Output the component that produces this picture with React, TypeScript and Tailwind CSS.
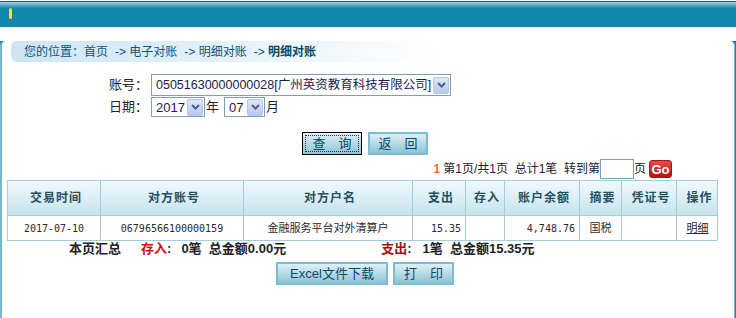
import React from 'react';

const font = { fontFamily: '"Liberation Sans", "Noto Sans CJK SC", sans-serif' };

function Arrow() {
  return (
    <div className="flex items-center justify-center w-[16px] h-[17px] bg-gradient-to-b from-[#dfe8fb] to-[#b7c9ef] border border-[#b5c6ec] rounded-[2px]">
      <svg width="9" height="6" viewBox="0 0 9 6">
        <path d="M1 1 L4.5 4.5 L8 1" stroke="#4d6185" strokeWidth="2" fill="none" />
      </svg>
    </div>
  );
}

function FakeSelect({ value, width, size }: { value: string; width: string; size: string }) {
  return (
    <div className={`${width} h-full flex items-center justify-between border border-[#7f9db9] bg-white pl-[4px] pr-[1px]`}>
      <span className={`${size} text-[#1b1b4a] whitespace-nowrap leading-none`}>{value}</span>
      <Arrow />
    </div>
  );
}

function Btn({ label, width, focus }: { label: string; width: string; focus?: boolean }) {
  return (
    <div
      className={`${width} h-[23px] flex items-center justify-center bg-gradient-to-b from-[#dff0f6] to-[#8cc4d6] text-[13px] text-[#0d4a66] ${
        focus ? 'border border-black p-[2px]' : 'border-2 border-[#7dbccf]'
      }`}
    >
      <div className={`w-full h-full flex items-center justify-center ${focus ? 'border border-dotted border-[#3a2a2a]' : ''}`}>
        {label}
      </div>
    </div>
  );
}

const cols = [
  { w: 'w-[92px]', h: '交易时间', v: '2017-07-10', a: 'text-center' },
  { w: 'w-[143px]', h: '对方账号', v: '06796566100000159', a: 'text-center' },
  { w: 'w-[169px]', h: '对方户名', v: '金融服务平台对外清算户', a: 'text-center' },
  { w: 'w-[53px]', h: '支出', v: '15.35', a: 'text-right pr-[4px]' },
  { w: 'w-[39px]', h: '存入', v: '', a: 'text-right' },
  { w: 'w-[75px]', h: '账户余额', v: '4,748.76', a: 'text-right pr-[4px]' },
  { w: 'w-[42px]', h: '摘要', v: '国税', a: 'text-center' },
  { w: 'w-[55px]', h: '凭证号', v: '', a: 'text-center' },
  { w: 'w-[42px]', h: '操作', v: '明细', a: 'text-center underline' },
];

export default function App() {
  return (
    <div className="w-[736px] h-[318px] overflow-hidden bg-white" style={font}>
      {/* top bar */}
      <div className="h-[27px] bg-[#1287ab]">
        <div className="h-[1px] bg-white" />
        <div className="h-[1px] bg-[#1c5f7c]" />
        <div className="h-[6px] bg-gradient-to-b from-[#9fd0df] to-[#1287ab]" />
        <div className="ml-[9px] w-[3px] h-[11px] bg-[#ffe21a] rounded-[2px]" />
      </div>
      {/* content frame */}
      <div className="bg-[#1287ab] pr-[1px]">
        <div className="h-[291px] bg-white rounded-t-[5px] border-l-2 border-r border-[#78b7cb] border-t-0">
          {/* breadcrumb */}
          <div className="mt-[14px] ml-[9px] w-[430px] h-[21px] flex items-center pl-[13px] rounded-l-[6px] bg-gradient-to-r from-[#cde5f3] via-[#e4f1f9] to-white text-[12px] text-[#0c5579] whitespace-nowrap">
            <span>您的位置：首页</span>
            <span className="ml-[7px]">-&gt; 电子对账</span>
            <span className="ml-[7px]">-&gt; 明细对账</span>
            <span className="ml-[7px]">-&gt; <b className="text-[#0a4763]">明细对账</b></span>
          </div>
          {/* form */}
          <div className="mt-[12px] flex h-[22px] items-center">
            <div className="ml-[103px] w-[43px] text-right text-[13px] text-[#222]">账号：</div>
            <div className="ml-[3px] h-[22px]">
              <FakeSelect value="05051630000000028[广州英资教育科技有限公司]" width="w-[300px]" size="text-[12.5px]" />
            </div>
          </div>
          <div className="mt-[1px] flex h-[20px] items-center">
            <div className="ml-[103px] w-[43px] text-right text-[13px] text-[#222]">日期：</div>
            <div className="ml-[3px] h-[20px]">
              <FakeSelect value="2017" width="w-[54px]" size="text-[13px]" />
            </div>
            <span className="ml-[1px] text-[13px] text-[#222]">年</span>
            <div className="ml-[5px] h-[20px]">
              <FakeSelect value="07" width="w-[41px]" size="text-[13px]" />
            </div>
            <span className="ml-[1px] text-[13px] text-[#222]">月</span>
          </div>
          {/* buttons */}
          <div className="mt-[15px] flex gap-[6px] pl-[300px]">
            <Btn label="查　询" width="w-[60px]" focus />
            <Btn label="返　回" width="w-[60px]" />
          </div>
          {/* pagination */}
          <div className="mt-[4px] flex items-center justify-end pr-[62px] h-[20px] text-[12px] text-[#222] whitespace-nowrap">
            <b className="text-[#f06a1a] mr-[3px]">1</b>
            <span>第1页/共1页&nbsp; 总计1笔&nbsp; 转到第</span>
            <div className="w-[34px] h-[20px] border border-[#7f9db9] bg-white" />
            <span>页</span>
            <div className="ml-[3px] w-[23px] h-[18px] rounded-[3px] bg-gradient-to-b from-[#e84a4a] to-[#b31313] border border-[#9e1a1a] flex items-center justify-center text-white font-bold text-[13px] leading-none">
              Go
            </div>
          </div>
          {/* table */}
          <div className="mt-[1px] ml-[5px] w-[711px] border border-[#a6cbd9]">
            <div className="flex h-[35px] bg-gradient-to-b from-[#f1f9fc] to-[#c6e3ed] border-b border-[#a6cbd9]">
              {cols.map((c, i) => (
                <div
                  key={i}
                  className={`${c.w} shrink-0 flex items-center justify-center pl-[4px] text-[12px] font-bold tracking-[1px] text-[#24505e] ${
                    i > 0 ? 'border-l border-[#a6cbd9]' : ''
                  }`}
                >
                  {c.h}
                </div>
              ))}
            </div>
            <div className="flex h-[24px]">
              {cols.map((c, i) => (
                <div
                  key={i}
                  className={`${c.w} shrink-0 flex items-center ${c.a.includes('right') ? 'justify-end' : 'justify-center'} ${c.a} text-[11px] text-[#2a2a2a] whitespace-nowrap ${
                    i > 0 ? 'border-l border-[#a6cbd9]' : ''
                  }`}
                  style={i === 1 || i === 3 || i === 5 || i === 0 ? { fontFamily: '"DejaVu Sans Mono", monospace', fontSize: '10px' } : undefined}
                >
                  {c.v}
                </div>
              ))}
            </div>
          </div>
          {/* summary */}
          <div className="flex items-center h-[16px] text-[13px] font-bold text-[#222] whitespace-nowrap">
            <span className="ml-[67px]">本页汇总</span>
            <span className="ml-[20px] text-[#d01010]">存入</span>
            <span>:</span>
            <span className="ml-[10px]">0笔&nbsp; 总金额0.00元</span>
            <span className="ml-[95px] text-[#a80e0e]">支出</span>
            <span>:</span>
            <span className="ml-[11px]">1笔&nbsp; 总金额15.35元</span>
          </div>
          {/* bottom buttons */}
          <div className="mt-[5px] flex gap-[5px] pl-[274px]">
            <Btn label="Excel文件下载" width="w-[112px]" />
            <Btn label="打　印" width="w-[61px]" />
          </div>
        </div>
      </div>
    </div>
  );
}
